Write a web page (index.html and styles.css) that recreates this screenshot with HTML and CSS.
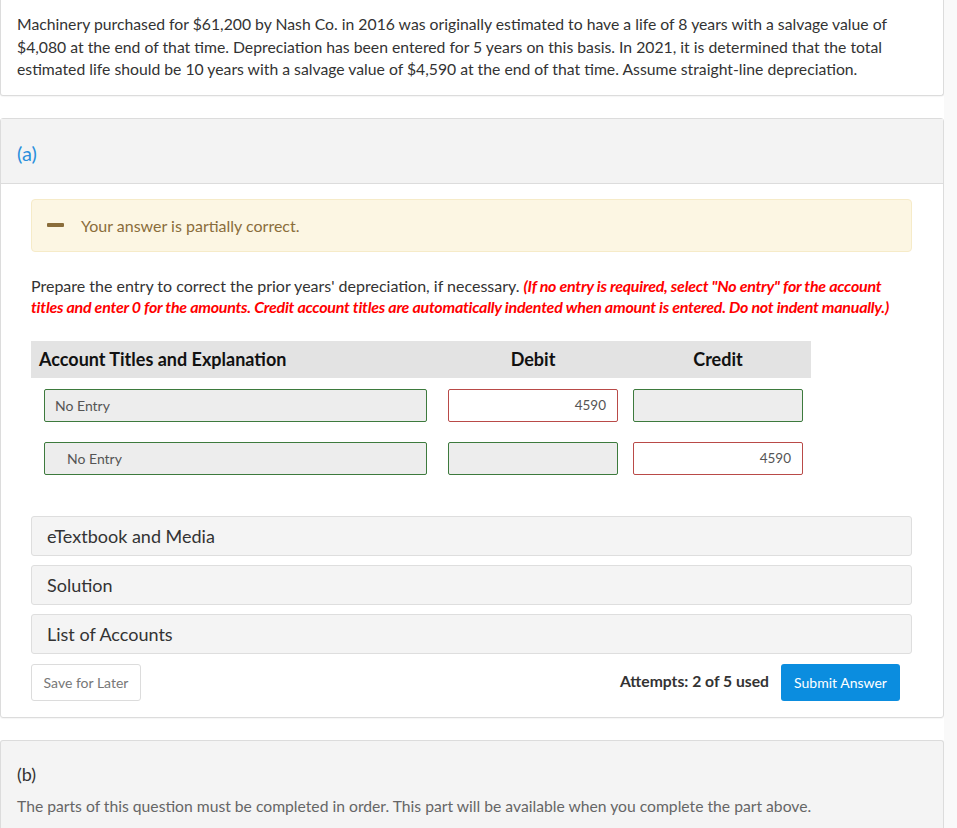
FILE: index.html
```html
<!DOCTYPE html>
<html>
<head>
<meta charset="utf-8">
<link rel="stylesheet" href="styles.css">
</head>
<body>
<div class="page">
  <div class="panel question">
    Machinery purchased for $61,200 by Nash Co. in 2016 was originally estimated to have a life of 8 years with a salvage value of $4,080 at the end of that time. Depreciation has been entered for 5 years on this basis. In 2021, it is determined that the total estimated life should be 10 years with a salvage value of $4,590 at the end of that time. Assume straight-line depreciation.
  </div>

  <div class="panel part">
    <div class="part-head"><span class="part-label">(a)</span></div>
    <div class="part-body">
      <div class="alert">
        <span class="alert-dash"></span>
        <span>Your answer is partially correct.</span>
      </div>
      <p class="prompt">Prepare the entry to correct the prior years' depreciation, if necessary. <em class="req">(If no entry is required, select "No entry" for the account titles and enter 0 for the amounts. Credit account titles are automatically indented when amount is entered. Do not indent manually.)</em></p>

      <div class="journal">
        <div class="jhead">
          <div class="jh-account">Account Titles and Explanation</div>
          <div class="jh-amt jh-debit">Debit</div>
          <div class="jh-amt jh-credit">Credit</div>
        </div>
        <div class="jrow">
          <div class="field account ok">No Entry</div>
          <div class="field amt debit bad">4590</div>
          <div class="field amt credit ok"></div>
        </div>
        <div class="jrow">
          <div class="field account ok indent">No Entry</div>
          <div class="field amt debit ok"></div>
          <div class="field amt credit bad">4590</div>
        </div>
      </div>

      <div class="accordion">eTextbook and Media</div>
      <div class="accordion">Solution</div>
      <div class="accordion">List of Accounts</div>

      <div class="actions">
        <button class="btn-save">Save for Later</button>
        <div class="attempts">Attempts: 2 of 5 used</div>
        <button class="btn-submit">Submit Answer</button>
      </div>
    </div>
  </div>

  <div class="panel part locked">
    <div class="locked-label">(b)</div>
    <div class="locked-text">The parts of this question must be completed in order. This part will be available when you complete the part above.</div>
  </div>
</div>
</body>
</html>
```

FILE: styles.css
```css
html {
  background: #f9f9f9;
}
body {
  margin: 0;
  font-family: Lato, "Open Sans", "Liberation Sans", sans-serif;
  color: #333;
  font-size: 16px;
}
.page {
  width: 944px;
  background: #fff;
  min-height: 828px;
  overflow: hidden;
}
.panel {
  border: 1px solid #dcdcdc;
  border-radius: 3px;
  background: #fff;
  box-shadow: 0 1px 1px rgba(0,0,0,0.04);
}
.question {
  border-top: none;
  border-radius: 0 0 3px 3px;
  padding: 13px 16px 14px 16px;
  line-height: 22.5px;
  font-size: 15.75px;
  color: #333;
}
.part {
  margin-top: 22px;
}
.part-head {
  background: #f3f3f3;
  border-bottom: 1px solid #dcdcdc;
  height: 64px;
  display: flex;
  align-items: center;
  padding-left: 16px;
}
.part-label {
  color: #2a8fdc;
  font-size: 20px;
  margin-top: 4px;
}
.part-body {
  padding: 15px 31px 16px 30px;
}
.alert {
  background: #fcf6e3;
  border: 1px solid #f6ebc8;
  border-radius: 4px;
  height: 51px;
  display: flex;
  align-items: center;
  color: #8a6d3b;
  font-size: 16px;
  padding-left: 15px;
}
.alert-dash {
  display: inline-block;
  width: 17px;
  height: 4px;
  background: #8a6d3b;
  border-radius: 1px;
  margin-right: 17px;
}
.prompt {
  margin: 23px 0 0 0;
  line-height: 21px;
  color: #333;
}
.req {
  color: #ff0000;
  font-weight: bold;
  font-style: italic;
  letter-spacing: -0.25px;
}
.journal {
  margin-top: 24px;
  width: 780px;
}
.jhead {
  background: #e3e3e3;
  height: 37px;
  display: flex;
  align-items: center;
  font-weight: bold;
  font-size: 18px;
  color: #111;
}
.jh-account {
  width: 409px;
  padding-left: 8px;
}
.jh-amt {
  width: 170px;
  text-align: center;
}
.jh-credit {
  margin-left: 15px;
}
.jrow {
  display: flex;
  margin-top: 11px;
  padding-left: 13px;
}
.jrow + .jrow {
  margin-top: 20px;
}
.field {
  box-sizing: border-box;
  height: 33px;
  border: 1px solid #3d7a3d;
  border-radius: 2px;
  background: #ededed;
  font-size: 14px;
  color: #555;
  line-height: 31px;
}
.field.bad {
  border-color: #b94a48;
  background: #fff;
}
.account {
  width: 383px;
  padding-left: 10px;
}
.account.indent {
  padding-left: 22px;
}
.amt {
  width: 170px;
  text-align: right;
  padding-right: 11px;
  font-size: 13.5px;
}
.debit {
  margin-left: 21px;
}
.credit {
  margin-left: 15px;
}
.accordion {
  margin-top: 9px;
  height: 38px;
  background: #f4f4f4;
  border: 1px solid #dedede;
  border-radius: 3px;
  font-size: 18px;
  color: #333;
  display: flex;
  align-items: center;
  padding-left: 15px;
}
.journal + .accordion {
  margin-top: 41px;
}
.actions {
  margin-top: 10px;
  display: flex;
  align-items: center;
}
.btn-save {
  width: 110px;
  height: 37px;
  background: #fff;
  border: 1px solid #dcdcdc;
  border-radius: 3px;
  font-family: inherit;
  font-size: 14px;
  color: #777;
  padding: 0;
}
.attempts {
  margin-left: auto;
  font-weight: bold;
  font-size: 15.7px;
  color: #333;
  margin-right: 12px;
  margin-top: -3px;
}
.btn-submit {
  width: 119px;
  height: 37px;
  background: #0b8ddf;
  border: none;
  border-radius: 3px;
  color: #fff;
  font-family: inherit;
  font-size: 14px;
  padding: 0;
  margin-right: 12px;
}
.locked {
  background: #f4f4f4;
  padding: 21px 16px 20px 16px;
  border-bottom: none;
}
.locked-label {
  font-size: 18px;
  color: #333;
  line-height: 24px;
}
.locked-text {
  margin-top: 9px;
  font-size: 15.7px;
  color: #666;
  line-height: 22px;
}
```
